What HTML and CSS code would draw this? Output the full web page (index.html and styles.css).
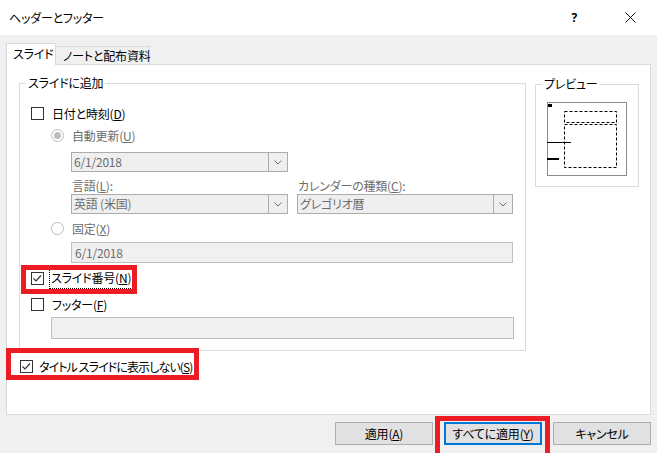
FILE: index.html
```html
<!DOCTYPE html>
<html lang="ja">
<head>
<meta charset="utf-8">
<title>ヘッダーとフッター</title>
<link rel="stylesheet" href="styles.css">
</head>
<body>
<div class="titlebar">
  <span class="title">ヘッダーとフッター</span>
  <span class="help">?</span>
  <svg class="close" width="11" height="11" viewBox="0 0 11 11"><path d="M0.5 0.5 L10.5 10.5 M10.5 0.5 L0.5 10.5" stroke="#111" stroke-width="1" fill="none"/></svg>
</div>
<div class="content">
  <div class="tabs">
    <div class="tab active">スライド</div>
    <div class="tab">ノートと配布資料</div>
  </div>
  <div class="panel">
    <div class="groups">
      <fieldset class="group main">
        <legend>スライドに追加</legend>
        <div class="row r-date">
          <span class="cb"></span><span class="lbl">日付と時刻(<u>D</u>)</span>
        </div>
        <div class="row r-auto dis">
          <span class="rb on"></span><span class="lbl">自動更新(<u>U</u>)</span>
        </div>
        <div class="row r-dd1">
          <div class="combo w1"><span class="val">6/1/2018</span><span class="arrow"><svg width="8" height="5" viewBox="0 0 8 5"><path d="M0.5 0.5 L4 4 L7.5 0.5" stroke="#707070" fill="none"/></svg></span></div>
        </div>
        <div class="row grid r-labels dis">
          <span>言語(<u>L</u>):</span>
          <span>カレンダーの種類(<u>C</u>):</span>
        </div>
        <div class="row grid r-dd2">
          <div class="combo"><span class="val">英語 (米国)</span><span class="arrow"><svg width="8" height="5" viewBox="0 0 8 5"><path d="M0.5 0.5 L4 4 L7.5 0.5" stroke="#707070" fill="none"/></svg></span></div>
          <div class="combo"><span class="val">グレゴリオ暦</span><span class="arrow"><svg width="8" height="5" viewBox="0 0 8 5"><path d="M0.5 0.5 L4 4 L7.5 0.5" stroke="#707070" fill="none"/></svg></span></div>
        </div>
        <div class="row r-fixed dis">
          <span class="rb"></span><span class="lbl">固定(<u>X</u>)</span>
        </div>
        <div class="row r-fixedin">
          <div class="field w2">6/1/2018</div>
        </div>
        <div class="row r-num">
          <span class="cb checked"><svg width="11" height="11" viewBox="0 0 11 11"><path d="M1.5 5.5 L4 8 L9 2.5" stroke="#333" stroke-width="1.2" fill="none"/></svg></span><span class="lbl focus">スライド番号(<u>N</u>)</span>
        </div>
        <div class="row r-footer">
          <span class="cb"></span><span class="lbl">フッター(<u>F</u>)</span>
        </div>
        <div class="row r-footin">
          <div class="field w3"></div>
        </div>
      </fieldset>
      <fieldset class="group preview">
        <legend>プレビュー</legend>
        <svg class="pv" width="80" height="74" viewBox="0 0 80 74">
          <rect x="0.5" y="0.5" width="79" height="73" fill="#fff" stroke="#8a8a8f"/>
          <rect x="1" y="2" width="4" height="3" fill="#000"/>
          <rect x="17.5" y="9.5" width="52" height="11" fill="none" stroke="#000" stroke-dasharray="3 2"/>
          <rect x="17.5" y="22.5" width="52" height="43" fill="none" stroke="#000" stroke-dasharray="3 2"/>
          <path d="M0 40.5 H24" stroke="#000"/>
          <path d="M0 57 H12" stroke="#000" stroke-width="2"/>
        </svg>
      </fieldset>
    </div>
    <div class="row r-title">
      <span class="cb checked"><svg width="11" height="11" viewBox="0 0 11 11"><path d="M1.5 5.5 L4 8 L9 2.5" stroke="#333" stroke-width="1.2" fill="none"/></svg></span><span class="lbl">タイトル スライドに表示しない(<u>S</u>)</span>
    </div>
  </div>
  <div class="buttons">
    <button class="btn">適用(<u>A</u>)</button>
    <button class="btn default">すべてに適用(<u>Y</u>)</button>
    <button class="btn">キャンセル</button>
  </div>
</div>
<div class="mark m1"></div>
<div class="mark m2"></div>
<div class="mark m3"></div>
</body>
</html>
```

FILE: styles.css
```css
* { box-sizing: border-box; }
html, body { margin: 0; padding: 0; }
body {
  width: 657px;
  height: 453px;
  overflow: hidden;
  position: relative;
  background: #f0f0f0;
  font-family: "Noto Sans CJK JP", "Noto Sans", sans-serif;
  font-size: 12px;
  font-feature-settings: "palt";
  letter-spacing: -0.2px;
  color: #000;
}
u { text-decoration: underline; text-underline-offset: 1px; }

.titlebar {
  height: 35px;
  background: #fff;
  display: flex;
  align-items: center;
  padding-left: 9px;
}
.title { flex: 1; }
.help {
  font-family: "Noto Sans", sans-serif;
  font-weight: bold;
  font-size: 12px;
  margin-right: 48px;
}
.close { margin-right: 21px; }

.content { padding: 0 6px; }
.tabs {
  display: flex;
  align-items: flex-end;
  height: 21px;
  margin-top: 8px;
}
.tab {
  border: 1px solid #d9d9d9;
  border-bottom: none;
  background: #f0f0f0;
  height: 18px;
  width: 95px;
  margin-left: -1px;
  line-height: 17px;
  padding-left: 7px;
  white-space: nowrap;
}
.tab.active {
  position: relative;
  z-index: 1;
  background: #fff;
  height: 22px;
  width: 50px;
  margin-left: 0;
  margin-bottom: -1px;
  line-height: 19px;
  padding-left: 6px;
}
.panel {
  width: 645px;
  height: 351px;
  background: #fff;
  border: 1px solid #d9d9d9;
  padding: 10px 0 0 12px;
}
.groups { display: flex; gap: 9px; align-items: flex-start; }
.group {
  margin: 0;
  padding: 0;
  border: 1px solid #dcdcdc;
  min-width: 0;
}
.group legend {
  padding: 0 2px;
  margin-left: 6px;
  line-height: 16px;
  font-size: 12px;
}
.main { width: 507px; height: 276px; }
.preview { width: 104px; height: 111px; margin-top: 1px; }
.pv { display: block; margin: 10px 0 0 11px; }

.row { display: flex; align-items: center; height: 20px; }
.dis { color: #6d6d6d; }
.lbl { margin-left: 8px; white-space: nowrap; }
.cb {
  width: 13px;
  height: 13px;
  border: 1px solid #333;
  background: #fff;
  display: flex;
  align-items: center;
  justify-content: center;
  flex: none;
}
.rb {
  width: 13px;
  height: 13px;
  border: 1px solid #bcbcbc;
  border-radius: 50%;
  background: #fff;
  flex: none;
  display: flex;
  align-items: center;
  justify-content: center;
}
.rb.on::after {
  content: "";
  width: 7px;
  height: 7px;
  border-radius: 50%;
  background: #bcbcbc;
}
.focus { outline: 1px dotted #000; outline-offset: 0; padding: 1px 1px 2px; margin-left: 6px; }

.r-date { margin-top: 12px; padding-left: 11px; }
.r-auto { margin-top: 2px; padding-left: 31px; }
.r-dd1 { margin-top: 7px; padding-left: 51px; }
.grid {
  display: grid;
  grid-template-columns: 217px 216px;
  column-gap: 9px;
  align-items: center;
}
.r-labels { margin-top: 4px; height: 18px; padding-left: 52px; }
.r-dd2 { padding-left: 51px; }
.r-fixed { margin-top: 4px; padding-left: 31px; }
.r-fixedin { margin-top: 4px; padding-left: 51px; height: 21px; }
.r-num { margin-top: 5px; padding-left: 11px; }
.r-footer { margin-top: 6px; padding-left: 11px; }
.r-footin { margin-top: 3px; padding-left: 31px; height: 22px; }
.r-title { margin-top: 5px; padding-left: 1px; }
.r-title .lbl { margin-left: 6px; letter-spacing: -0.9px; }

.combo {
  height: 20px;
  border: 1px solid #acacac;
  background: #efefef;
  display: flex;
  color: #6d6d6d;
}
.combo.w1 { width: 217px; }
.combo .val { flex: 1; padding-left: 2px; line-height: 18px; white-space: nowrap; }
.combo .arrow {
  width: 19px;
  border-left: 1px solid #acacac;
  display: flex;
  align-items: center;
  justify-content: center;
}
.field {
  height: 100%;
  border: 1px solid #bfbfbf;
  background: #f0f0f0;
  color: #6d6d6d;
  padding-left: 3px;
  line-height: 19px;
}
.w2 { width: 442px; }
.w3 { width: 463px; }

.buttons {
  display: flex;
  justify-content: flex-end;
  gap: 11px;
  margin-top: 7px;
}
.btn {
  width: 98px;
  height: 23px;
  border: 1px solid #adadad;
  background: #e1e1e1;
  font-family: inherit;
  font-size: 12px;
  font-feature-settings: "palt";
  letter-spacing: -0.2px;
  color: #000;
  padding: 0;
  margin: 0;
}
.btn.default { border: 2px solid #0078d7; }

.mark { position: absolute; border: 5px solid #ed1c24; }
.m1 { left: 21px; top: 265px; width: 116px; height: 29px; }
.m2 { left: 6px; top: 348px; width: 193px; height: 32px; }
.m3 { left: 435px; top: 416px; width: 115px; height: 42px; }
```
